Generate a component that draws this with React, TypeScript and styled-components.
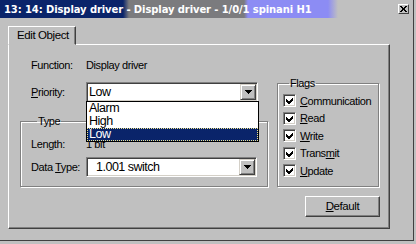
import React from 'react';
import styled, { createGlobalStyle } from 'styled-components';

const GlobalStyle = createGlobalStyle`
  html, body {
    margin: 0;
    padding: 0;
    background: #c0c0c0;
  }
  * {
    box-sizing: border-box;
  }
`;

const UI_FONT = `"Liberation Sans", Arial, sans-serif`;

const Window = styled.div`
  width: 416px;
  height: 244px;
  padding: 0 2px 3px 0;
  background: #c0c0c0;
  font-family: ${UI_FONT};
  font-size: 11px;
  letter-spacing: -0.4px;
  color: #000;
  overflow: hidden;
`;

const Frame = styled.div`
  height: 100%;
  border-right: 1px solid #404040;
  border-bottom: 1px solid #404040;
  display: flex;
  flex-direction: column;
`;

const TitleBar = styled.div`
  height: 18px;
  display: flex;
  align-items: center;
  padding: 0 3px 0 4px;
  background: linear-gradient(
    90deg,
    #0a246a 0,
    #0a246a 123px,
    #7b7b7e 129px,
    #7b7b7e 244px,
    #8c8cf4 248px,
    #8c8cf4 328px,
    #c0c0c0 338px
  );
`;

const Caption = styled.span`
  flex: 1;
  color: #fff;
  font-family: "DejaVu Sans", Verdana, sans-serif;
  font-weight: bold;
  font-size: 10px;
  letter-spacing: -0.1px;
  white-space: nowrap;
`;

const CloseButton = styled.div`
  width: 11px;
  height: 10px;
  margin-right: 1px;
  margin-top: -1px;
  background: #c0c0c0;
  border: 1px solid;
  border-color: #fff #404040 #404040 #fff;
  display: flex;
  align-items: center;
  justify-content: center;
`;

const Body = styled.div`
  flex: 1;
  padding: 8px 23px 0 8px;
  display: flex;
  flex-direction: column;
`;

const TabStrip = styled.div`
  display: flex;
  position: relative;
  z-index: 1;
  margin-bottom: -1px;
`;

const Tab = styled.div`
  width: 68px;
  height: 19px;
  background: #c0c0c0;
  border: 1px solid;
  border-color: #fff #404040 transparent #fff;
  box-shadow: inset -1px 0 0 #808080;
  display: flex;
  align-items: center;
  padding-left: 8px;
  padding-bottom: 1px;
  white-space: nowrap;
  font-size: 11.5px;
`;

const Panel = styled.div`
  height: 185px;
  border: 1px solid;
  border-color: #fff #404040 #404040 #fff;
  box-shadow: inset -1px -1px 0 #808080;
  display: grid;
  grid-template-columns: 248px 102px;
  column-gap: 9px;
  align-items: start;
  padding: 13px 0 0 11px;
`;

const Column = styled.div`
  display: flex;
  flex-direction: column;
`;

const FieldRow = styled.div<{ $h?: number; $mt?: number; $indent?: number }>`
  display: flex;
  align-items: center;
  height: ${(p) => p.$h ?? 13}px;
  margin-top: ${(p) => p.$mt ?? 0}px;
  margin-left: ${(p) => p.$indent ?? 0}px;
  position: relative;
`;

const Label = styled.span`
  width: 55px;
  flex: none;
  white-space: nowrap;
`;

const Value = styled.span`
  white-space: nowrap;
`;

const Group = styled.fieldset<{ $mt: number; $pad: string }>`
  margin: ${(p) => p.$mt}px 0 0 0;
  padding: ${(p) => p.$pad};
  border: 1px solid #808080;
  box-shadow: inset 1px 1px 0 #fff, 1px 1px 0 #fff;
  min-width: 0;
`;

const Legend = styled.legend`
  padding: 0 1px;
  margin-left: 6px;
  line-height: 13px;
`;

const Combo = styled.div<{ $w: number }>`
  position: relative;
  width: ${(p) => p.$w}px;
  height: 20px;
  background: #fff;
  border: 1px solid;
  border-color: #808080 #fff #fff #808080;
  box-shadow: inset 1px 1px 0 #404040, inset -1px -1px 0 #d4d0c8;
  display: flex;
  align-items: center;
`;

const ComboText = styled.span<{ $pl: number }>`
  flex: 1;
  padding-left: ${(p) => p.$pl}px;
  font-size: 12.5px;
  letter-spacing: -0.5px;
`;

const ArrowButton = styled.div`
  width: 16px;
  height: 16px;
  margin-right: 1px;
  background: #c0c0c0;
  border: 1px solid;
  border-color: #d4d0c8 #404040 #404040 #d4d0c8;
  box-shadow: inset 1px 1px 0 #fff, inset -1px -1px 0 #808080;
  display: flex;
  align-items: center;
  justify-content: center;
`;

const DropList = styled.ul`
  position: absolute;
  top: 100%;
  left: -1px;
  width: 173px;
  margin: 0;
  padding: 0;
  list-style: none;
  background: #fff;
  border: 1px solid #000;
  z-index: 5;
`;

const DropItem = styled.li<{ $selected?: boolean }>`
  height: 13px;
  line-height: 13px;
  padding-left: 2px;
  font-size: 12.5px;
  letter-spacing: -0.5px;
  color: ${(p) => (p.$selected ? '#fff' : '#000')};
  background: ${(p) => (p.$selected ? '#0a246a' : 'transparent')};
  outline: ${(p) => (p.$selected ? '1px dotted #f0e68c' : 'none')};
  outline-offset: -1px;
`;

const CheckRow = styled.div`
  display: flex;
  align-items: center;
  height: 17.5px;
  gap: 4px;
  white-space: nowrap;
`;

const CheckBox = styled.div`
  width: 13px;
  height: 13px;
  flex: none;
  background: #fff;
  border: 1px solid;
  border-color: #808080 #fff #fff #808080;
  box-shadow: inset 1px 1px 0 #404040, inset -1px -1px 0 #d4d0c8;
  display: flex;
  align-items: center;
  justify-content: center;
`;

const Button = styled.div`
  align-self: flex-end;
  margin: 9px -1px 0 0;
  width: 75px;
  height: 21px;
  background: #c0c0c0;
  border: 1px solid;
  border-color: #fff #404040 #404040 #fff;
  box-shadow: inset -1px -1px 0 #808080;
  display: flex;
  align-items: center;
  justify-content: center;
  font-size: 11.5px;
`;

const U = styled.u`
  text-decoration-thickness: 1px;
  text-underline-offset: 1px;
`;

const Arrow = () => (
  <svg width="7" height="4" viewBox="0 0 7 4" shapeRendering="crispEdges">
    <path d="M0 0h7v1H6v1H5v1H4v1H3V3H2V2H1V1H0z" fill="#000" />
  </svg>
);

const Check = () => (
  <svg width="9" height="9" viewBox="0 0 9 9" shapeRendering="crispEdges">
    <path d="M8 1v3L4 8H3L1 6V3l2 2h1z" fill="#000" />
  </svg>
);

const CloseGlyph = () => (
  <svg width="7" height="6" viewBox="0 0 7 6" shapeRendering="crispEdges">
    <path d="M0 0h2v1h1v1h1V1h1V0h2v1H6v1H5v2h1v1h1v1H5V5H4V4H3v1H2v1H0V5h1V4h1V2H1V1H0z" fill="#000" />
  </svg>
);

const flags: { pre: string; key: string; post: string }[] = [
  { pre: '', key: 'C', post: 'ommunication' },
  { pre: '', key: 'R', post: 'ead' },
  { pre: '', key: 'W', post: 'rite' },
  { pre: 'Trans', key: 'm', post: 'it' },
  { pre: '', key: 'U', post: 'pdate' },
];

export default function App() {
  return (
    <>
      <GlobalStyle />
      <Window>
        <Frame>
          <TitleBar>
            <Caption>13: 14: Display driver - Display driver - 1/0/1 spinani H1</Caption>
            <CloseButton>
              <CloseGlyph />
            </CloseButton>
          </TitleBar>
          <Body>
            <TabStrip>
              <Tab>Edit Object</Tab>
            </TabStrip>
            <Panel>
              <Column>
                <FieldRow $indent={11}>
                  <Label>Function:</Label>
                  <Value>Display driver</Value>
                </FieldRow>
                <FieldRow $indent={11} $h={20} $mt={11}>
                  <Label>
                    <U>P</U>riority:
                  </Label>
                  <Combo $w={172}>
                    <ComboText $pl={2}>Low</ComboText>
                    <ArrowButton>
                      <Arrow />
                    </ArrowButton>
                    <DropList>
                      <DropItem>Alarm</DropItem>
                      <DropItem>High</DropItem>
                      <DropItem $selected>Low</DropItem>
                    </DropList>
                  </Combo>
                </FieldRow>
                <Group $mt={13} $pad="9px 9px 9px 10px">
                  <Legend>Type</Legend>
                  <FieldRow>
                    <Label>Length:</Label>
                    <Value>1 bit</Value>
                  </FieldRow>
                  <FieldRow $h={20} $mt={7}>
                    <Label>
                      Data <U>T</U>ype:
                    </Label>
                    <Combo $w={171}>
                      <ComboText $pl={9}>1.001 switch</ComboText>
                      <ArrowButton>
                        <Arrow />
                      </ArrowButton>
                    </Combo>
                  </FieldRow>
                </Group>
              </Column>
              <Column>
                <Group $mt={19} $pad="2px 4px 6px 5px">
                  <Legend>Flags</Legend>
                  {flags.map((f) => (
                    <CheckRow key={f.key + f.post}>
                      <CheckBox>
                        <Check />
                      </CheckBox>
                      <span>
                        {f.pre}
                        <U>{f.key}</U>
                        {f.post}
                      </span>
                    </CheckRow>
                  ))}
                </Group>
                <Button>
                  <span>
                    <U>D</U>efault
                  </span>
                </Button>
              </Column>
            </Panel>
          </Body>
        </Frame>
      </Window>
    </>
  );
}
